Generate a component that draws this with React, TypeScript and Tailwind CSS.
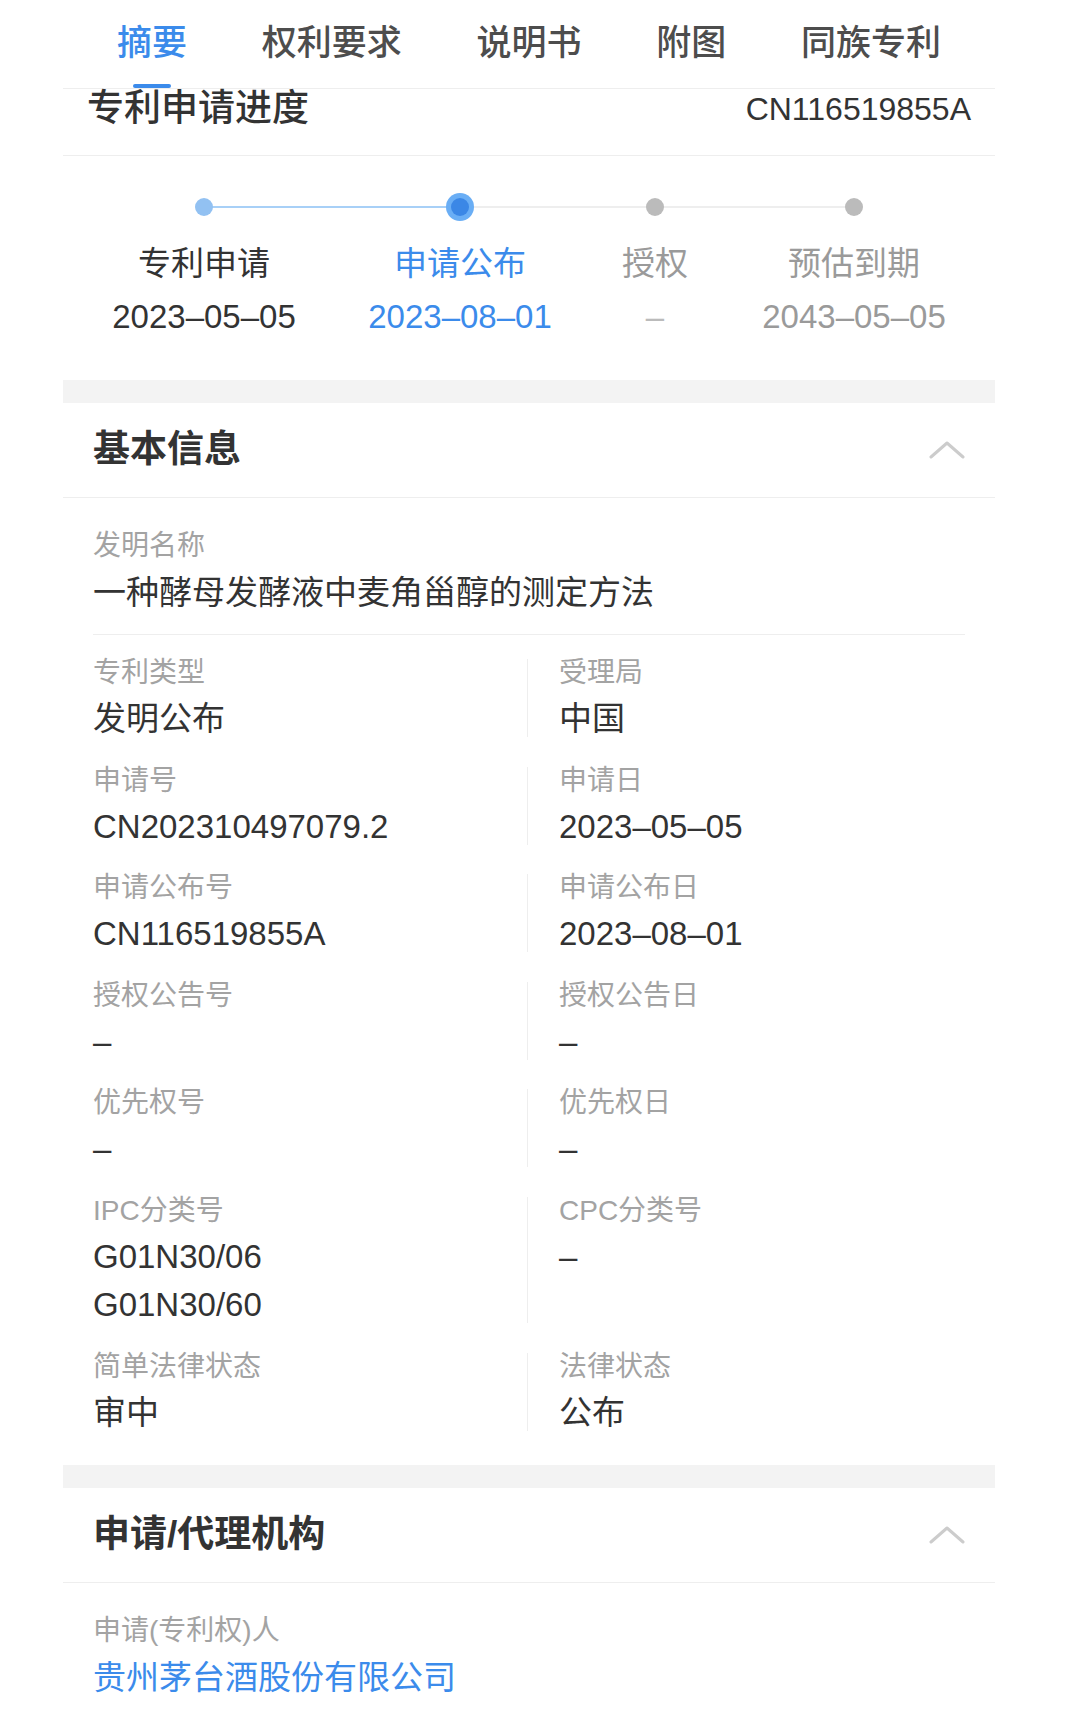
import React from 'react';

const tabs = ['摘要', '权利要求', '说明书', '附图', '同族专利'];

const steps = [
    { name: '专利申请', date: '2023–05–05', state: 'done' },
    { name: '申请公布', date: '2023–08–01', state: 'active' },
    { name: '授权', date: '–', state: 'todo' },
    { name: '预估到期', date: '2043–05–05', state: 'todo' },
];

const fields: { label: string; values: string[] }[][] = [
    [{ label: '专利类型', values: ['发明公布'] }, { label: '受理局', values: ['中国'] }],
    [{ label: '申请号', values: ['CN202310497079.2'] }, { label: '申请日', values: ['2023–05–05'] }],
    [{ label: '申请公布号', values: ['CN116519855A'] }, { label: '申请公布日', values: ['2023–08–01'] }],
    [{ label: '授权公告号', values: ['–'] }, { label: '授权公告日', values: ['–'] }],
    [{ label: '优先权号', values: ['–'] }, { label: '优先权日', values: ['–'] }],
    [{ label: 'IPC分类号', values: ['G01N30/06', 'G01N30/60'] }, { label: 'CPC分类号', values: ['–'] }],
    [{ label: '简单法律状态', values: ['审中'] }, { label: '法律状态', values: ['公布'] }],
];

const ChevronUp = () => (
    <svg width="36" height="18" viewBox="0 0 36 18" fill="none">
        <path d="M2 16L18 2L34 16" stroke="#cccccc" strokeWidth="3" strokeLinecap="round" strokeLinejoin="round" />
    </svg>
);

const SectionHeader = ({ title }: { title: string }) => (
    <div className="h-[95px] px-[30px] flex items-center justify-between border-b border-[#eeeeee]">
        <span className="text-[37px] leading-[44px] font-bold text-[#333333]">{title}</span>
        <ChevronUp />
    </div>
);

const Field = ({ label, values, right }: { label: string; values: string[]; right?: boolean }) => (
    <div className={right ? 'border-l border-[#eeeeee] pl-[31px]' : ''}>
        <div className="text-[28px] leading-[28px] text-[#a3a3a3]">{label}</div>
        {values.map((v, i) => (
            <div key={i} className={`text-[33px] leading-[36px] text-[#333333] ${i === 0 ? 'mt-[14px]' : 'mt-[12px]'}`}>
                {v}
            </div>
        ))}
    </div>
);

const Band = () => <div className="h-[23px] bg-[#f3f3f3]" />;

export default function App() {
    return (
        <div className="min-h-[1711px] bg-white font-['Liberation_Sans','Noto_Sans_CJK_SC',sans-serif]">
            <div className="ml-[63px] w-[932px] bg-white">
                {/* Tabs */}
                <div className="h-[89px] px-[54px] flex justify-between border-b border-[#eeeeee]">
                    {tabs.map((t, i) => (
                        <div key={t} className="relative flex flex-col items-center pt-[25px]">
                            <span className={`text-[35px] leading-[36px] font-medium ${i === 0 ? 'text-[#3b8beb]' : 'text-[#4d4d4d]'}`}>
                                {t}
                            </span>
                            {i === 0 && <span className="absolute bottom-0 w-[38px] h-[4px] rounded-full bg-[#3b8beb]" />}
                        </div>
                    ))}
                </div>

                {/* Progress title */}
                <div className="px-[24px] pb-[26px] flex justify-between border-b border-[#eeeeee]">
                    <span className="text-[37px] leading-[40px] font-medium text-[#333333]">专利申请进度</span>
                    <span className="text-[32px] leading-[40px] text-[#333333]">CN116519855A</span>
                </div>

                {/* Stepper */}
                <div className="relative pt-[37px] pb-[43px]">
                    <div className="absolute top-[50px] left-[141px] w-[650px] h-[2px] bg-[#eeeeee]" />
                    <div className="absolute top-[50px] left-[141px] w-[256px] h-[2px] bg-[#a8d0f7]" />
                    <div className="relative grid grid-cols-[282px_230px_160px_238px]">
                        {steps.map((s) => (
                            <div key={s.name} className="flex flex-col items-center">
                                <div className="h-[28px] flex items-center justify-center">
                                    {s.state === 'done' && <span className="w-[18px] h-[18px] rounded-full bg-[#92c1f2]" />}
                                    {s.state === 'active' && (
                                        <span className="w-[28px] h-[28px] rounded-full bg-[#6aaef5] flex items-center justify-center">
                                            <span className="w-[18px] h-[18px] rounded-full bg-[#3b87e6]" />
                                        </span>
                                    )}
                                    {s.state === 'todo' && <span className="w-[18px] h-[18px] rounded-full bg-[#bbbbbb]" />}
                                </div>
                                <div
                                    className={`mt-[23px] text-[33px] leading-[40px] ${
                                        s.state === 'active' ? 'text-[#3b8beb]' : s.state === 'done' ? 'text-[#333333]' : 'text-[#9a9a9a]'
                                    }`}
                                >
                                    {s.name}
                                </div>
                                <div
                                    className={`mt-[13px] text-[33px] leading-[40px] ${
                                        s.state === 'active'
                                            ? 'text-[#3b8beb]'
                                            : s.state === 'done'
                                            ? 'text-[#333333]'
                                            : s.date === '–'
                                            ? 'text-[#bbbbbb]'
                                            : 'text-[#9a9a9a]'
                                    }`}
                                >
                                    {s.date}
                                </div>
                            </div>
                        ))}
                    </div>
                </div>

                <Band />

                {/* Basic info */}
                <SectionHeader title="基本信息" />
                <div className="px-[30px] pb-[34px]">
                    <div className="pt-[34px] pb-[23px] border-b border-[#eeeeee]">
                        <div className="text-[28px] leading-[28px] text-[#a3a3a3]">发明名称</div>
                        <div className="mt-[15px] text-[33px] leading-[36px] text-[#333333]">一种酵母发酵液中麦角甾醇的测定方法</div>
                    </div>
                    <div className="pt-[24px] grid grid-cols-[434px_1fr] gap-y-[29.6px]">
                        {fields.map((row) => (
                            <React.Fragment key={row[0].label}>
                                <Field label={row[0].label} values={row[0].values} />
                                <Field label={row[1].label} values={row[1].values} right />
                            </React.Fragment>
                        ))}
                    </div>
                </div>

                <Band />

                {/* Applicant / agency */}
                <SectionHeader title="申请/代理机构" />
                <div className="px-[30px] pt-[34px] pb-[20px]">
                    <div className="text-[28px] leading-[28px] text-[#a3a3a3]">申请(专利权)人</div>
                    <div className="mt-[15px] text-[33px] leading-[36px] text-[#3b8beb]">贵州茅台酒股份有限公司</div>
                </div>
            </div>
        </div>
    );
}
